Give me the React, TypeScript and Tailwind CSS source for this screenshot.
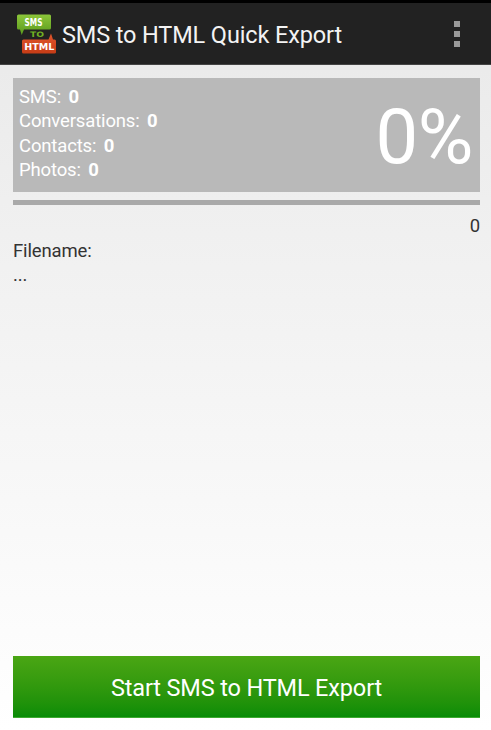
const stats = [
  { label: "SMS", value: 0 },
  { label: "Conversations", value: 0 },
  { label: "Contacts", value: 0 },
  { label: "Photos", value: 0 },
];

function AppLogo() {
  return (
    <svg width="40" height="40" viewBox="0 0 40 40" className="shrink-0">
      <defs>
        <linearGradient id="green" x1="0" y1="0" x2="0" y2="1">
          <stop offset="0" stopColor="#8cc63a" />
          <stop offset="1" stopColor="#5a9a1c" />
        </linearGradient>
        <linearGradient id="red" x1="0" y1="0" x2="0" y2="1">
          <stop offset="0" stopColor="#e2562c" />
          <stop offset="1" stopColor="#c63c16" />
        </linearGradient>
      </defs>
      <path
        d="M2.5 .5h31A1.500 1.500 0 0 1 35 2v12a1.500 1.500 0 0 1-1.500 1.500H8L5.700 21 4 15.500H2.500A1.500 1.500 0 0 1 1 14V2A1.500 1.500 0 0 1 2.500 .5z"
        fill="url(#green)"
      />
      <path
        d="M7.500 25.500H32.500l2.500-6 2 6h1.500A1.500 1.500 0 0 1 40 27v11.500A1.500 1.500 0 0 1 38.500 39.500H7.500A1.500 1.500 0 0 1 6 38V27A1.500 1.500 0 0 1 7.500 25.500z"
        fill="url(#red)"
      />
      <g fontFamily="'DejaVu Sans', sans-serif" fontWeight="700" textAnchor="middle">
        <text x="17.500" y="11.500" fontSize="10" textLength="18" lengthAdjust="spacingAndGlyphs" fill="#fff">SMS</text>
        <text x="21" y="22.500" fontSize="7.500" textLength="14" lengthAdjust="spacingAndGlyphs" fill="#71b022">TO</text>
        <text x="23.300" y="36" fontSize="9.500" textLength="30" lengthAdjust="spacingAndGlyphs" fill="#fff">HTML</text>
      </g>
    </svg>
  );
}

function ActionBar() {
  return (
    <header className="flex h-[65px] items-center border-t-[3px] border-b border-t-black border-b-[#444] bg-[#222] pl-4 pr-[31px] text-[#f3f3f3]">
      <AppLogo />
      <h1 className="ml-1.5 flex-1 whitespace-nowrap pt-1 text-[23.5px] leading-none tracking-[-0.13px]">
        SMS to HTML Quick Export
      </h1>
      <button aria-label="More options" className="flex flex-col gap-1">
        <span className="size-1.5 bg-[#999]" />
        <span className="size-1.5 bg-[#999]" />
        <span className="size-1.5 bg-[#999]" />
      </button>
    </header>
  );
}

export default function App() {
  return (
    <div className="flex h-[730px] w-[491px] flex-col bg-linear-to-b from-[#e9e9e9] to-white font-['Roboto',sans-serif]">
      <ActionBar />

      <main className="flex flex-1 flex-col pt-[12.5px] pr-[11px] pb-3 pl-[13px] text-[18.5px] leading-[24.5px] tracking-[-0.15px] text-[#333]">
        <section className="flex h-[114.5px] items-center justify-between bg-[#b9b9b9] pr-[7px] pb-0.5 pl-1.5 text-white">
          <ul>
            {stats.map((stat) => (
              <li key={stat.label}>
                {stat.label}: <b className="ml-[3px]">{stat.value}</b>
              </li>
            ))}
          </ul>
          <span className="pt-[7px] text-[76px] leading-none tracking-[-0.5px]">0%</span>
        </section>

        <div className="mt-2 h-[5px] bg-[#a9a9a9]" />

        <p className="mt-[9px] text-right">0</p>
        <p>Filename:</p>
        <p>...</p>

        <button className="mt-auto h-[62px] border-b border-[#3faa30] bg-linear-to-b from-[#4aa614] to-[#078c07] pt-[3px] text-[23.5px] text-white">
          Start SMS to HTML Export
        </button>
      </main>
    </div>
  );
}
